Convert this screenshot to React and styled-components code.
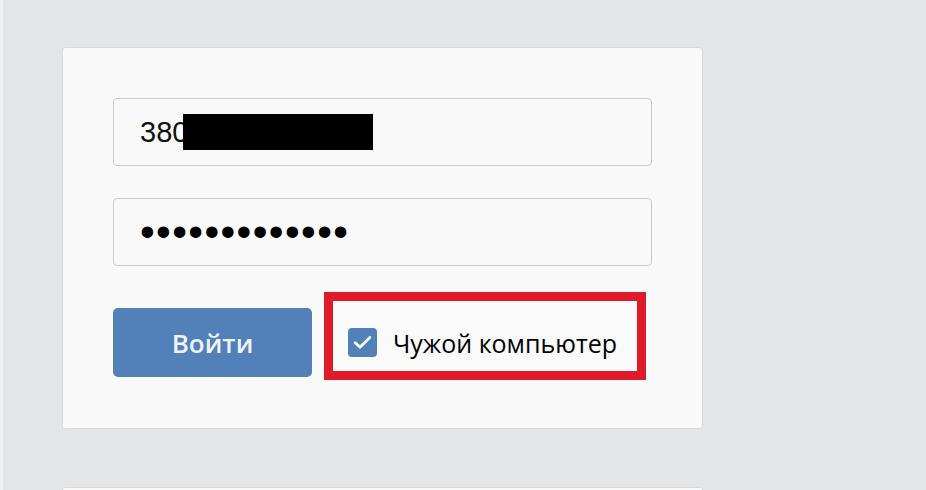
import React from 'react';
import styled, { createGlobalStyle } from 'styled-components';

const GlobalStyle = createGlobalStyle`
  html, body {
    margin: 0;
    padding: 0;
    background: #e4e5e7;
  }
`;

const Page = styled.div`
  height: 490px;
  overflow: hidden;
  box-sizing: border-box;
  border-left: 3px solid #eff0f1;
  padding: 47px 0 0 59px;
  background: #e4e5e7;
  font-family: "Open Sans", "Liberation Sans", sans-serif;
`;

const Card = styled.div`
  box-sizing: border-box;
  width: 641px;
  height: ${(p) => p.height || 'auto'};
  margin-bottom: 58px;
  padding: 50px 0 0 50px;
  background: #f9f9f9;
  border: 1px solid #d9dadc;
  border-radius: 3px;
`;

const Field = styled.div`
  box-sizing: border-box;
  width: 539px;
  height: 68px;
  margin-bottom: ${(p) => p.gap || 0}px;
  padding-left: 26px;
  display: flex;
  align-items: center;
  background: #f9f9f9;
  border: 1px solid #c9cacc;
  border-radius: 4px;
  font-family: "Liberation Sans", Arial, sans-serif;
  font-size: 29px;
  color: #111;
`;

const Redaction = styled.span`
  width: 190px;
  height: 36px;
  margin-left: -5px;
  background: #000;
`;

const Dots = styled.span`
  font-family: "Liberation Sans", Arial, sans-serif;
  font-size: 42px;
  letter-spacing: 1.4px;
  line-height: 1;
  color: #000;
`;

const Actions = styled.div`
  margin-top: 26px;
  display: flex;
  align-items: flex-start;
  gap: 12px;
`;

const LoginButton = styled.button`
  box-sizing: border-box;
  width: 199px;
  height: 69px;
  margin-top: 16px;
  border: none;
  border-radius: 5px;
  background: #5181b8;
  color: #eef3f9;
  font-family: "Open Sans", sans-serif;
  font-size: 26px;
  font-weight: 600;
  cursor: pointer;
`;

const Highlight = styled.label`
  box-sizing: border-box;
  width: 322px;
  height: 88px;
  padding: 26px 0 0 15px;
  display: flex;
  align-items: flex-start;
  gap: 16px;
  border: 9px solid #de1a2b;
  background: #fafafa;
  cursor: pointer;
`;

const CheckBox = styled.span`
  flex: none;
  width: 29px;
  height: 29px;
  margin-top: 1px;
  display: flex;
  align-items: center;
  justify-content: center;
  background: #5181b8;
  border-radius: 4px;
`;

const CheckLabel = styled.span`
  font-size: 25px;
  line-height: 32px;
  color: #000;
  white-space: nowrap;
`;

export default function App() {
  return (
    <>
      <GlobalStyle />
      <Page>
        <Card height="382px">
          <Field gap={32}>
            380
            <Redaction />
          </Field>
          <Field>
            <Dots>•••••••••••••</Dots>
          </Field>
          <Actions>
            <LoginButton>Войти</LoginButton>
            <Highlight>
              <CheckBox>
                <svg width="19" height="15" viewBox="0 0 19 15">
                  <path
                    d="M2.2 7.8 L7 12.2 L16.8 2.6"
                    fill="none"
                    stroke="#fff"
                    strokeWidth="2.8"
                    strokeLinecap="round"
                    strokeLinejoin="round"
                  />
                </svg>
              </CheckBox>
              <CheckLabel>Чужой компьютер</CheckLabel>
            </Highlight>
          </Actions>
        </Card>
        <Card height="40px" />
      </Page>
    </>
  );
}
